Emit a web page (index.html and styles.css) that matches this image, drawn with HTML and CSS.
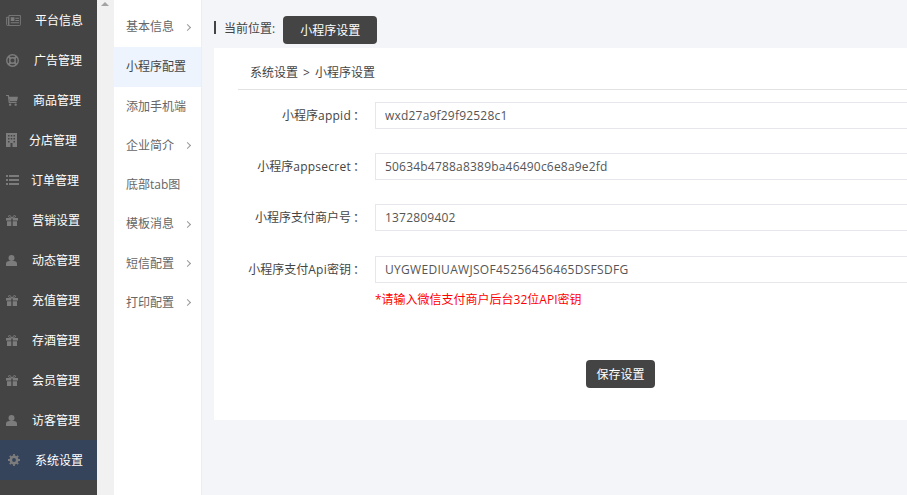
FILE: index.html
```html
<!DOCTYPE html>
<html lang="zh-CN">
<head>
<meta charset="utf-8">
<title>小程序设置</title>
<link rel="stylesheet" href="styles.css">
</head>
<body>
<svg class="defs" width="0" height="0">
  <symbol id="i-news" viewBox="0 0 16 12"><path d="M.5 2.500h2v9h-1a1 1 0 0 1-1-1zM3 .5h12.500v10a1 1 0 0 1-1 1H3z" fill="none" stroke="currentColor"/><path d="M5 2.500h4v4H5zM10 3h4v1h-4zM10 5.500h4v1h-4zM5 8h9v1H5z" fill="currentColor"/></symbol>
  <symbol id="i-globe" viewBox="0 0 14 14"><circle cx="7" cy="7" r="6.200" fill="none" stroke="currentColor" stroke-width="1.500"/><circle cx="7" cy="7" r="3" fill="none" stroke="currentColor" stroke-width="1.500"/><path d="M2.500 2.500l2.400 2.400M11.500 2.500L9.100 4.900M2.500 11.500l2.400-2.400M11.500 11.500L9.100 9.100" stroke="currentColor" stroke-width="2.200"/></symbol>
  <symbol id="i-cart" viewBox="0 0 13 12"><path d="M0 .5h2.500l1 7.500h8" fill="none" stroke="currentColor" stroke-width="1.300"/><path d="M3 2h10l-1 4.500H4z" fill="currentColor"/><circle cx="4.500" cy="10.500" r="1.300" fill="currentColor"/><circle cx="10.500" cy="10.500" r="1.300" fill="currentColor"/></symbol>
  <symbol id="i-building" viewBox="0 0 11 14"><path fill-rule="evenodd" d="M0 0h11v14H0zM2 2v1.500h1.500V2zM4.750 2v1.500h1.500V2zM7.500 2v1.500H9V2zM2 5v1.500h1.500V5zM4.750 5v1.500h1.500V5zM7.500 5v1.500H9V5zM2 8v1.500h1.500V8zM7.500 8v1.500H9V8zM4.500 10v4h2v-4z" fill="currentColor"/></symbol>
  <symbol id="i-list" viewBox="0 0 13 10"><path d="M0 0h2v2H0zM3 0h10v2H3zM0 4h2v2H0zM3 4h10v2H3zM0 8h2v2H0zM3 8h10v2H3z" fill="currentColor"/></symbol>
  <symbol id="i-gift" viewBox="0 0 12 11"><path d="M0 3h5.300v2.500H0zM6.700 3H12v2.500H6.700zM1 6.300h4.300V11H1zM6.700 6.300H11V11H6.700z" fill="currentColor"/><path d="M6 3C4 3 2.500 2.500 2.500 1.300 2.500.2 4.500 0 6 3c1.500-3 3.500-2.800 3.500-1.700C9.500 2.500 8 3 6 3z" fill="none" stroke="currentColor"/></symbol>
  <symbol id="i-user" viewBox="0 0 11 11"><circle cx="5.500" cy="3" r="3" fill="currentColor"/><path d="M0 11V8.500C0 7 1.500 6 3 6h5c1.500 0 3 1 3 2.500V11z" fill="currentColor"/></symbol>
  <symbol id="i-gear" viewBox="0 0 12 12"><circle cx="6" cy="6" r="3.200" fill="none" stroke="currentColor" stroke-width="2.600"/><path d="M6 0v12M0 6h12M1.800 1.800l8.400 8.400M10.200 1.800l-8.400 8.400" stroke="currentColor" stroke-width="1.800" stroke-dasharray="2.200 7.600"/></symbol>
</svg>

<div class="app">
  <nav class="side">
    <a class="side-item"><svg class="ico ico-news"><use href="#i-news"/></svg><span class="lab lab-35">平台信息</span></a>
    <a class="side-item"><svg class="ico ico-globe"><use href="#i-globe"/></svg><span class="lab lab-34">广告管理</span></a>
    <a class="side-item"><svg class="ico ico-cart"><use href="#i-cart"/></svg><span class="lab lab-33">商品管理</span></a>
    <a class="side-item"><svg class="ico ico-building"><use href="#i-building"/></svg><span class="lab lab-29">分店管理</span></a>
    <a class="side-item"><svg class="ico ico-list"><use href="#i-list"/></svg><span class="lab lab-31">订单管理</span></a>
    <a class="side-item"><svg class="ico ico-gift"><use href="#i-gift"/></svg><span class="lab lab-32">营销设置</span></a>
    <a class="side-item"><svg class="ico ico-user"><use href="#i-user"/></svg><span class="lab lab-32">动态管理</span></a>
    <a class="side-item"><svg class="ico ico-gift"><use href="#i-gift"/></svg><span class="lab lab-32">充值管理</span></a>
    <a class="side-item"><svg class="ico ico-gift"><use href="#i-gift"/></svg><span class="lab lab-32">存酒管理</span></a>
    <a class="side-item"><svg class="ico ico-gift"><use href="#i-gift"/></svg><span class="lab lab-32">会员管理</span></a>
    <a class="side-item"><svg class="ico ico-user"><use href="#i-user"/></svg><span class="lab lab-32">访客管理</span></a>
    <a class="side-item active"><svg class="ico ico-gear"><use href="#i-gear"/></svg><span class="lab lab-35">系统设置</span></a>
  </nav>
  <div class="scroll"><span class="scroll-arrow"></span></div>
  <aside class="sub">
    <a class="sub-item">基本信息<i class="chev"></i></a>
    <a class="sub-item current">小程序配置</a>
    <a class="sub-item">添加手机端</a>
    <a class="sub-item">企业简介<i class="chev"></i></a>
    <a class="sub-item">底部tab图</a>
    <a class="sub-item">模板消息<i class="chev"></i></a>
    <a class="sub-item">短信配置<i class="chev"></i></a>
    <a class="sub-item">打印配置<i class="chev"></i></a>
  </aside>
  <main class="main">
    <div class="crumb-bar">
      <span class="mark"></span>
      <span class="crumb-label">当前位置:</span>
      <span class="crumb-btn">小程序设置</span>
    </div>
    <section class="panel">
      <div class="panel-head">系统设置 &gt; 小程序设置</div>
      <form class="form">
        <div class="row">
          <label class="row-label">小程序<span class="lat">appid</span><span class="colon">：</span></label>
          <input class="field" value="wxd27a9f29f92528c1">
        </div>
        <div class="row">
          <label class="row-label">小程序<span class="lat">appsecret</span><span class="colon">：</span></label>
          <input class="field" value="50634b4788a8389ba46490c6e8a9e2fd">
        </div>
        <div class="row">
          <label class="row-label">小程序支付商户号<span class="colon">：</span></label>
          <input class="field" value="1372809402">
        </div>
        <div class="row row-last">
          <label class="row-label">小程序支付<span class="lat">Api</span>密钥<span class="colon">：</span></label>
          <input class="field field-caps" value="UYGWEDIUAWJSOF45256456465DSFSDFG">
        </div>
        <p class="hint">*请输入微信支付商户后台32位API密钥</p>
        <div class="actions"><button type="button" class="save">保存设置</button></div>
      </form>
    </section>
  </main>
</div>
</body>
</html>
```
FILE: styles.css
```css
* { box-sizing: border-box; }
html, body { margin: 0; height: 100%; overflow: hidden; }
body { font: 12px/1.5 "Open Sans", "Noto Sans CJK SC", sans-serif; color: #333; background: #fff; }
.defs { position: absolute; }
.app { display: flex; height: 495px; }

.side { width: 97px; flex: none; background: #444; }
.side-item { position: relative; display: flex; align-items: center; height: 40px; color: #fff; }
.side-item.active { background: #35445b; }
.lab { padding-top: 2px; }
.ico { position: absolute; left: 6px; top: 50%; color: #7c7c7c; }
.ico-news { width: 15px; height: 11px; margin-top: -5px; }
.ico-globe { width: 13px; height: 13px; margin-top: -6px; }
.ico-cart { width: 12px; height: 11px; margin-top: -5px; }
.ico-building { width: 11px; height: 14px; margin-top: -7px; }
.ico-list { width: 13px; height: 10px; margin-top: -5px; }
.ico-gift { width: 12px; height: 11px; margin-top: -5px; }
.ico-user { width: 11px; height: 11px; margin-top: -5px; }
.ico-gear { width: 12px; height: 12px; left: 8px; margin-top: -6px; }
.lab-35 { margin-left: 35px; }
.lab-34 { margin-left: 34px; }
.lab-33 { margin-left: 33px; }
.lab-31 { margin-left: 31px; }
.lab-32 { margin-left: 32px; }
.lab-29 { margin-left: 29px; }

.scroll { width: 17px; flex: none; background: #f1f1f1; padding: 2px 0 0 4px; }
.scroll-arrow { display: block; width: 0; height: 0; border: 4px solid transparent; border-top: 0; border-bottom: 4px solid #a3a3a3; }

.sub { width: 88px; flex: none; background: #fff; border-right: 1px solid #eceef2; padding-top: 7.750px; }
.sub-item { display: flex; align-items: center; height: 39.250px; padding-left: 12px; color: #666; }
.sub-item.current { background: #edf4fd; color: #444; height: 40px; }
.chev { width: 5px; height: 5px; margin-left: 10.500px; border-top: 1px solid #999; border-right: 1px solid #999; transform: rotate(45deg); }

.main { flex: 1; min-width: 0; background: #f4f5f8; padding: 16px 0 0 12px; }
.crumb-bar { display: flex; align-items: center; height: 28px; margin-bottom: 4px; }
.mark { width: 2px; height: 13px; background: #444; margin-top: -5px; }
.crumb-label { margin: -2px 0 0 8px; color: #444; }
.crumb-btn { margin-left: 8px; width: 94px; height: 28px; background: #444; color: #fff; border-radius: 4px; text-align: center; line-height: 29px; }
.panel { background: #fff; height: 372px; width: 100%; padding-left: 24px; overflow: hidden; }
.panel-head { height: 42px; padding: 16px 0 0 12px; border-bottom: 1px solid #e2e2e2; color: #444; white-space: nowrap; word-spacing: 2px; }
.form { padding-top: 12px; }
.row { display: flex; align-items: center; height: 27px; margin-bottom: 24px; }
.row-last { margin: 25px 0 0; }
.row-label { width: 127px; flex: none; text-align: right; color: #444; white-space: nowrap; }
.lat { letter-spacing: .25px; }
.colon { margin-left: 2px; }
.field { flex: none; margin-left: 10px; width: 560px; height: 27px; padding: 0 9px; border: 1px solid #e6e6ec; background: #fff; color: #555; font: 12px "Open Sans", "Noto Sans CJK SC", sans-serif; letter-spacing: .2px; outline: 0; }
.field-caps { letter-spacing: .3px; }
.hint { margin: 8px 0 0 137px; color: #f00; white-space: nowrap; }
.actions { margin-top: 51px; padding-left: 348px; }
.save { display: block; width: 69px; height: 28px; padding: 0; border: 0; border-radius: 4px; background: #444; color: #fff; font: 12px "Open Sans", "Noto Sans CJK SC", sans-serif; }
```
